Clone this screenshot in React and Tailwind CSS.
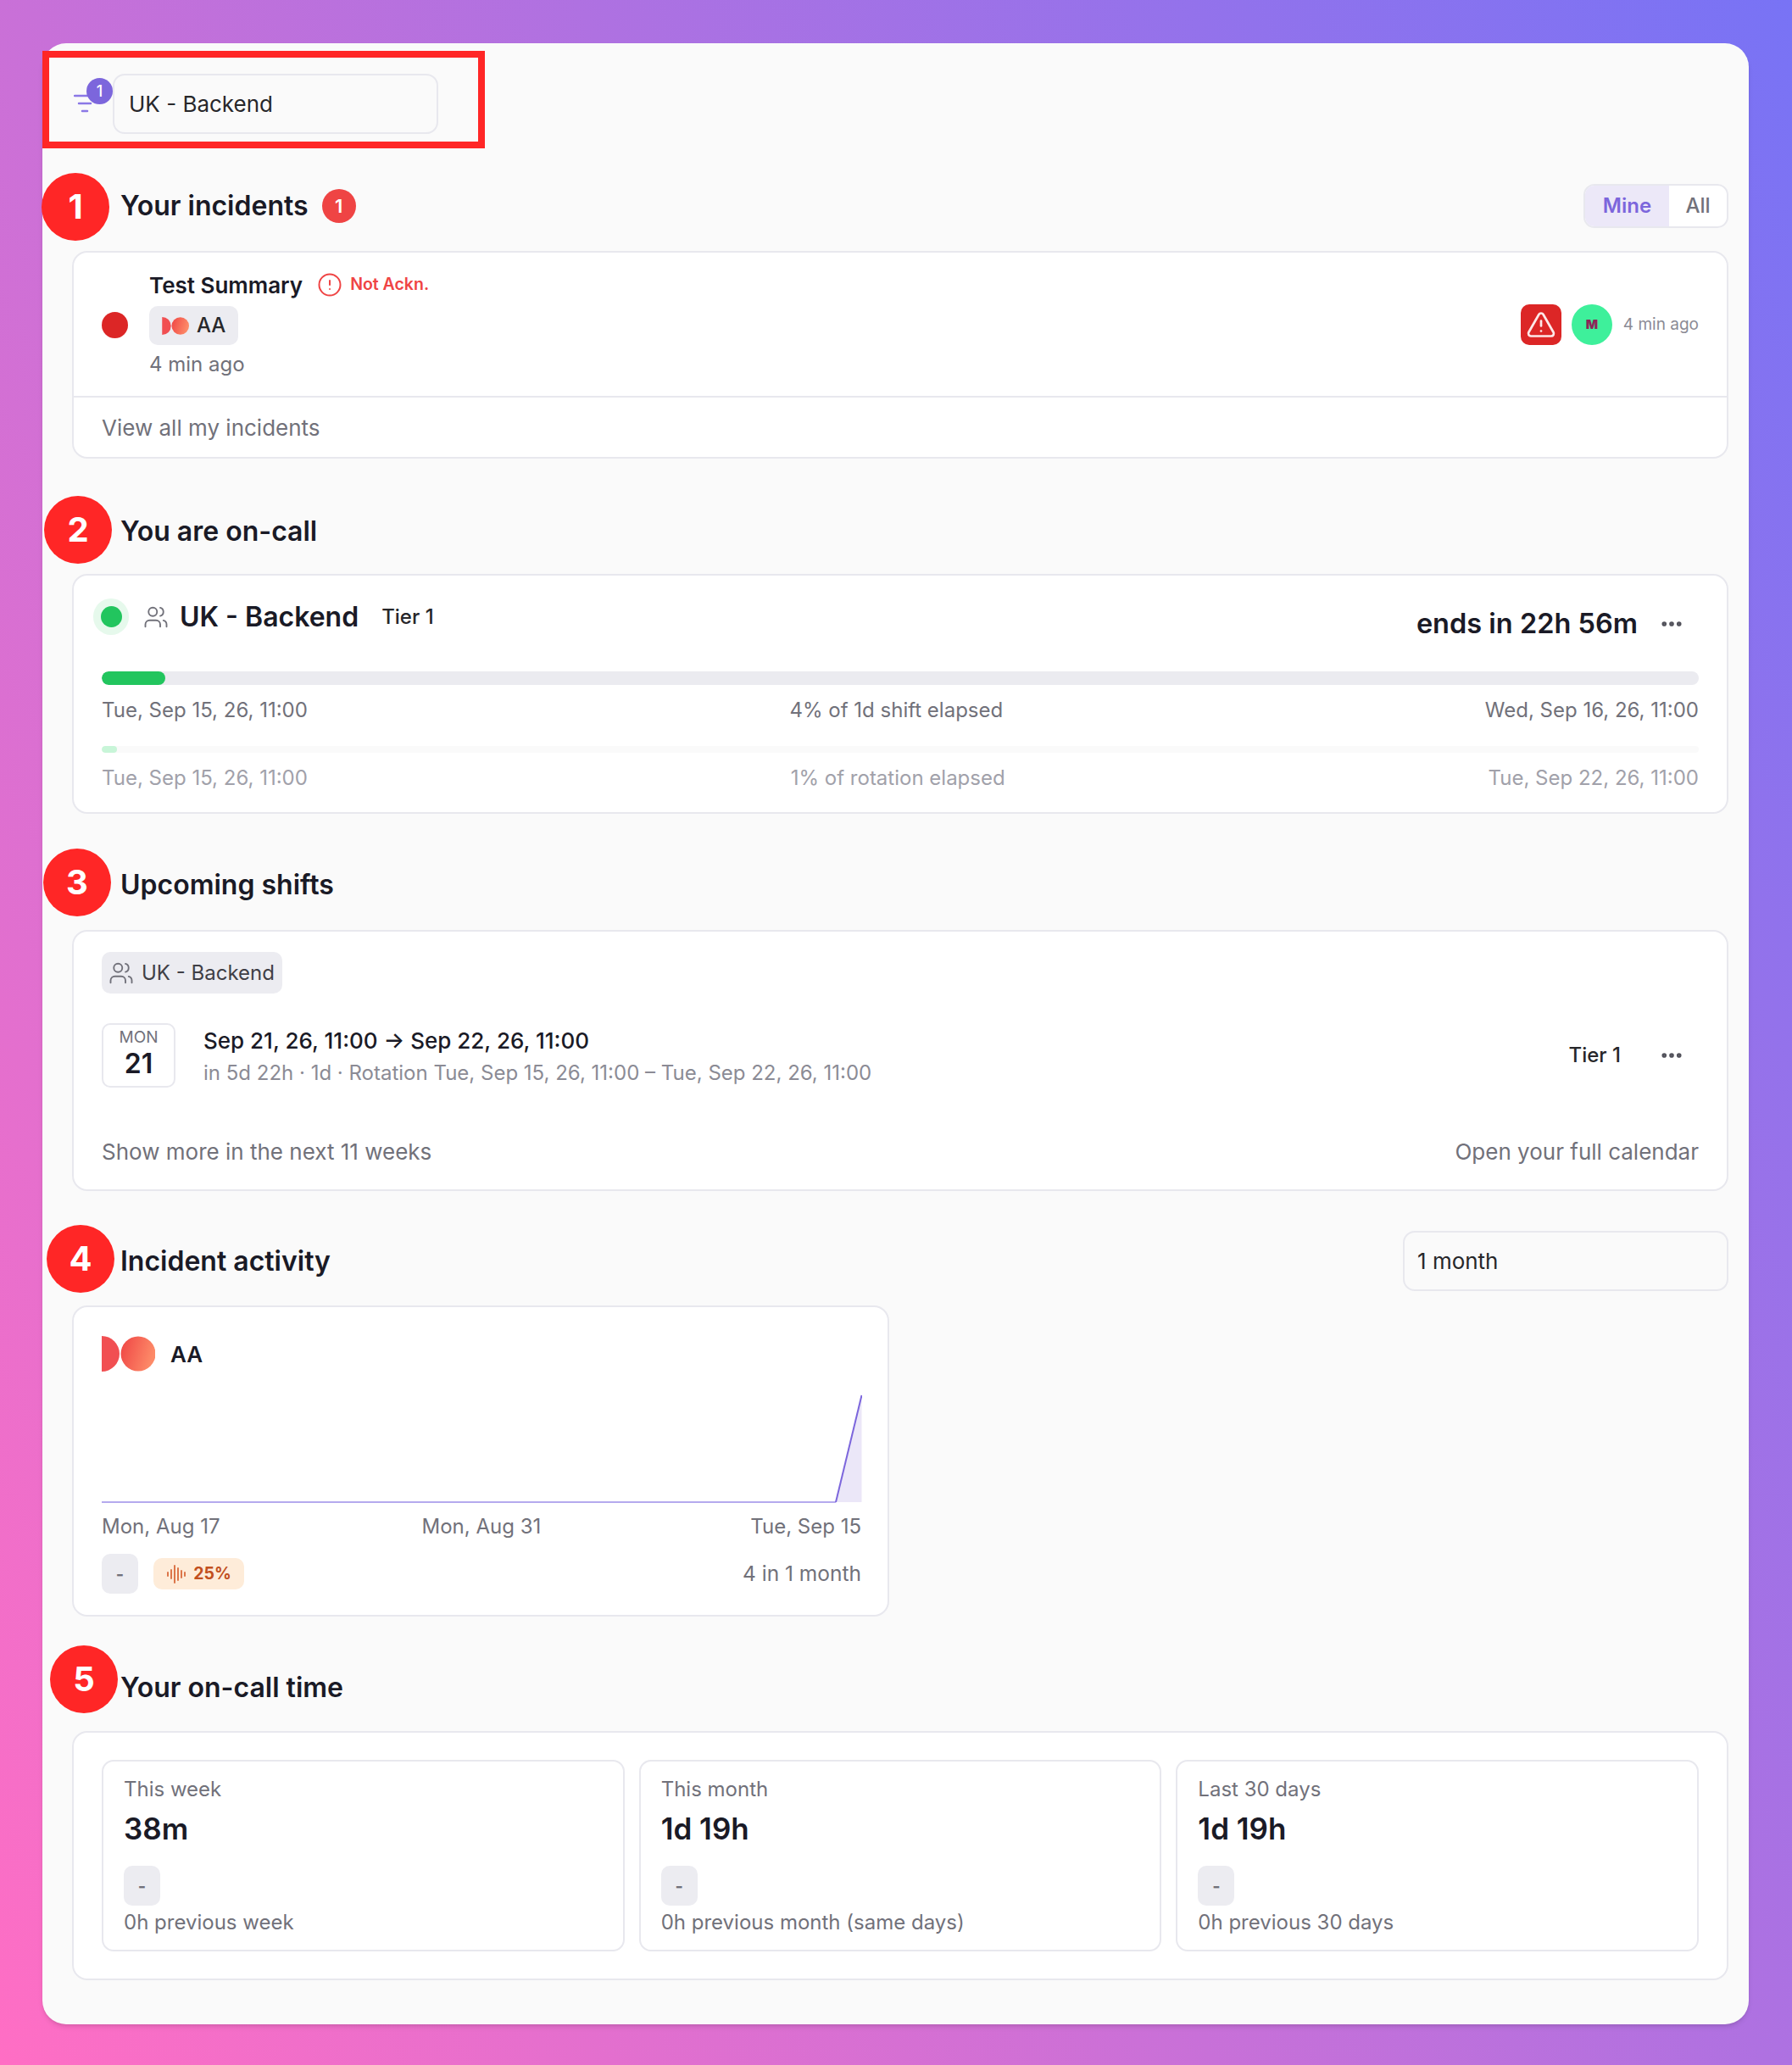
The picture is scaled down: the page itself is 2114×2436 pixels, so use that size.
import { AlertCircle, Ellipsis, TriangleAlert, Users } from 'lucide-react';

function Logo({ className, id }) {
    return (
        <svg viewBox="0 0 63 42" className={className}>
            <defs>
                <linearGradient id={id} x1="0" y1="0" x2="1" y2="0.3">
                    <stop offset="0" stopColor="#ef4444" />
                    <stop offset="1" stopColor="#fd8a68" />
                </linearGradient>
            </defs>
            <path d="M0 0A21 21 0 0 1 0 42Z" fill="#f14f52" />
            <circle cx="43" cy="21" r="20.5" fill={`url(#${id})`} />
        </svg>
    );
}

function Card({ className = '', children }) {
    return <div className={`rounded-[18px] border-2 border-[#e8e8ee] bg-white ${className}`}>{children}</div>;
}

function Heading({ marker, markerPos, title, className = '', badge, action }) {
    return (
        <div className={`relative flex min-h-[52px] items-center justify-between pl-[57px] ${className}`}>
            <span className={`absolute flex h-[80px] w-[80px] items-center justify-center rounded-full bg-[#ff2626] text-[40px] font-bold text-white ${markerPos}`}>
                {marker}
            </span>
            <div className="flex items-center gap-[16px]">
                <h2 className="text-[32px] font-semibold text-[#1a1a26]">{title}</h2>
                {badge}
            </div>
            {action}
        </div>
    );
}

function Progress({ width, barClass, fillClass, textClass, labels }) {
    return (
        <div>
            <div className={`overflow-hidden rounded-full ${barClass}`}>
                <div className={`h-full rounded-full ${width} ${fillClass}`} />
            </div>
            <div className={`mt-[15px] flex justify-between text-[24px] leading-[30px] ${textClass}`}>
                {labels.map((label) => (
                    <span key={label}>{label}</span>
                ))}
            </div>
        </div>
    );
}

function StatCard({ label, value, previous }) {
    return (
        <div className="flex flex-col rounded-[14px] border-2 border-[#e8e8ee] px-[24px] pb-[17px] pt-[18px]">
            <div className="text-[24px] leading-[30px] text-[#71717a]">{label}</div>
            <div className="mt-[9px] text-[35px] font-semibold leading-[44px] text-[#1a1a26]">{value}</div>
            <DashChip className="mt-[22px]" />
            <div className="mt-[5px] text-[24px] leading-[30px] text-[#71717a]">{previous}</div>
        </div>
    );
}

function DashChip({ className = '' }) {
    return (
        <span className={`flex h-[47px] w-[43px] items-center justify-center rounded-[10px] bg-[#ececf1] text-[20px] font-bold text-[#71717a] ${className}`}>
            -
        </span>
    );
}

export default function App() {
    return (
        <div className="min-h-screen bg-linear-[60deg,#ff6ec4,#7873f5] pb-[48px] pl-[50px] pr-[51px] pt-[51px] font-['Inter',sans-serif]">
            <main className="relative rounded-[28px] bg-[#fafafa] pb-[52px] pl-[35px] pr-[24px] pt-[36px] shadow-md">
                <div className="absolute left-0 top-[9px] h-[115px] w-[522px] border-[8px] border-[#ff2626]" />

                <div className="flex items-center">
                    <div className="relative h-[71px] w-[49px]">
                        <svg viewBox="0 0 26 22" className="absolute left-[2px] top-[24px] h-[22px] w-[26px]" fill="none" stroke="#8b78e6" strokeWidth="2.5" strokeLinecap="round">
                            <path d="M1 2h24M6 11h14M10 20h6" />
                        </svg>
                        <span className="absolute left-[17px] top-[5px] flex h-[31px] w-[31px] items-center justify-center rounded-full bg-[#7c66dc] text-[18px] font-medium text-white">
                            1
                        </span>
                    </div>
                    <div className="-ml-[1px] flex h-[71px] w-[384px] items-center rounded-[14px] border-2 border-[#e8e8ee] bg-[#fafafa] pl-[17px] text-[26px] text-[#27272a]">
                        UK - Backend
                    </div>
                </div>

                <Heading
                    marker="1"
                    markerPos="-left-[36px] -top-[13px]"
                    title="Your incidents"
                    className="mt-[59px]"
                    badge={
                        <span className="flex h-[40px] w-[40px] items-center justify-center rounded-full bg-[#ef4444] text-[22px] font-semibold text-white">
                            1
                        </span>
                    }
                    action={
                        <div className="flex h-[52px] w-[171px] overflow-hidden rounded-[13px] border-2 border-[#e8e8ee] bg-white text-[24px]">
                            <span className="flex w-[99px] items-center justify-center bg-[#ece8f8] font-semibold text-[#7c66dc]">Mine</span>
                            <span className="flex flex-1 items-center justify-center font-medium text-[#71717a]">All</span>
                        </div>
                    }
                />

                <Card className="mt-[27px]">
                    <div className="flex items-center justify-between pb-[22px] pl-[33px] pr-[33px] pt-[23px]">
                        <div className="flex items-center gap-[25px]">
                            <span className="h-[31px] w-[31px] rounded-full bg-[#dc2626]" />
                            <div>
                                <div className="flex h-[30px] items-center">
                                    <span className="text-[26px] font-semibold text-[#1a1a26]">Test Summary</span>
                                    <AlertCircle className="ml-[17px] h-[30px] w-[30px] text-[#ef4444]" strokeWidth={1.6} />
                                    <span className="ml-[9px] text-[19.5px] font-semibold text-[#ef4444]">Not Ackn.</span>
                                </div>
                                <div className="mt-[10px] flex h-[46px] w-[105px] items-center gap-[9px] rounded-[10px] bg-[#ececf1] pl-[15px] text-[24px] font-medium text-[#27272a]">
                                    <Logo id="logo-chip" className="h-[21px] w-[32px]" />
                                    AA
                                </div>
                                <div className="mt-[8px] text-[24px] leading-[30px] text-[#71717a]">4 min ago</div>
                            </div>
                        </div>
                        <div className="flex items-center">
                            <span className="flex h-[48px] w-[48px] items-center justify-center rounded-[10px] bg-[#dc2626]">
                                <TriangleAlert className="h-[36px] w-[36px] text-[#fde8e8]" strokeWidth={1.8} />
                            </span>
                            <span className="ml-[12px] flex h-[48px] w-[48px] items-center justify-center rounded-full bg-[#3ef09b] text-[15px] font-black text-[#8e2457]">
                                M
                            </span>
                            <span className="ml-[13px] text-[19px] text-[#8b8b95]">4 min ago</span>
                        </div>
                    </div>
                    <div className="flex h-[72px] items-center border-t-2 border-[#e8e8ee] pl-[33px] text-[26px] text-[#71717a]">
                        View all my incidents
                    </div>
                </Card>

                <Heading marker="2" markerPos="-left-[33px] -top-[16px]" title="You are on-call" className="mt-[60px]" />
                <Card className="mt-[24px] pb-[25px] pl-[33px] pr-[33px] pt-[27px]">
                    <div className="flex h-[43px] items-start justify-between">
                        <div className="flex h-[43px] items-center">
                            <span className="-ml-[10px] flex h-[43px] w-[42px] items-center justify-center rounded-full bg-[#e6f9ec]">
                                <span className="h-[25px] w-[25px] rounded-full bg-[#22c55e]" />
                            </span>
                            <Users className="ml-[17px] h-[30px] w-[30px] text-[#71717a]" strokeWidth={1.5} />
                            <span className="ml-[13px] text-[32px] font-semibold leading-[43px] text-[#1a1a26]">UK - Backend</span>
                            <span className="ml-[27px] text-[24px] font-medium leading-[43px] text-[#27272a]">Tier 1</span>
                        </div>
                        <div className="mt-[8px] flex h-[43px] items-center pr-[17px]">
                            <span className="text-[32.5px] font-semibold leading-[43px] text-[#1a1a26]">ends in 22h 56m</span>
                            <Ellipsis className="ml-[25px] h-[30px] w-[30px] text-[#52525b]" strokeWidth={2.5} />
                        </div>
                    </div>
                    <div className="mt-[43px]">
                        <Progress
                            width="w-[75px]"
                            barClass="h-[16px] bg-[#ebebf0]"
                            fillClass="bg-[#22c55e]"
                            textClass="text-[#71717a]"
                            labels={['Tue, Sep 15, 26, 11:00', '4% of 1d shift elapsed', 'Wed, Sep 16, 26, 11:00']}
                        />
                    </div>
                    <div className="mt-[27px]">
                        <Progress
                            width="w-[18px]"
                            barClass="h-[8px] bg-[#fafafa]"
                            fillClass="bg-[#c8f5d8]"
                            textClass="text-[#a1a1aa]"
                            labels={['Tue, Sep 15, 26, 11:00', '1% of rotation elapsed', 'Tue, Sep 22, 26, 11:00']}
                        />
                    </div>
                </Card>

                <Heading marker="3" markerPos="-left-[34px] -top-[17px]" title="Upcoming shifts" className="mt-[58px]" />
                <Card className="mt-[27px] pb-[29px] pl-[33px] pr-[33px] pt-[24px]">
                    <div className="flex h-[49px] w-[213px] items-center gap-[9px] rounded-[10px] bg-[#ececf1] pl-[8px] text-[24px] text-[#3f3f46]">
                        <Users className="h-[30px] w-[30px] text-[#71717a]" strokeWidth={1.5} />
                        UK - Backend
                    </div>
                    <div className="mt-[35px] flex items-center">
                        <div className="flex h-[76px] w-[87px] flex-col items-center rounded-[10px] border-2 border-[#e8e8ee] pt-[3px]">
                            <span className="text-[19px] leading-[24px] text-[#71717a]">MON</span>
                            <span className="text-[32px] font-semibold leading-[38px] text-[#1a1a26]">21</span>
                        </div>
                        <div className="ml-[33px] pt-[4px]">
                            <div className="text-[26px] font-medium leading-[32px] text-[#1a1a26]">Sep 21, 26, 11:00 → Sep 22, 26, 11:00</div>
                            <div className="mt-[6px] text-[24px] leading-[32px] text-[#8b8b95]">
                                in 5d 22h · 1d · Rotation Tue, Sep 15, 26, 11:00 – Tue, Sep 22, 26, 11:00
                            </div>
                        </div>
                        <span className="ml-auto text-[24px] font-medium text-[#27272a]">Tier 1</span>
                        <Ellipsis className="ml-[45px] mr-[17px] h-[30px] w-[30px] text-[#52525b]" strokeWidth={2.5} />
                    </div>
                    <div className="mt-[61px] flex justify-between text-[26px] leading-[30px] text-[#71717a]">
                        <span>Show more in the next 11 weeks</span>
                        <span>Open your full calendar</span>
                    </div>
                </Card>

                <Heading
                    marker="4"
                    markerPos="-left-[30px] -top-[7px]"
                    title="Incident activity"
                    className="mt-[47px]"
                    action={
                        <div className="flex h-[71px] w-[384px] items-center rounded-[14px] border-2 border-[#e8e8ee] bg-[#fafafa] pl-[15px] text-[26px] text-[#27272a]">
                            1 month
                        </div>
                    }
                />
                <Card className="mt-[17px] w-[964px] pb-[25px] pl-[33px] pr-[31px] pt-[34px]">
                    <div className="flex items-center gap-[18px]">
                        <Logo id="logo-large" className="h-[42px] w-[63px]" />
                        <span className="text-[26px] font-semibold text-[#1a1a26]">AA</span>
                    </div>
                    <svg viewBox="0 0 897 128" className="mt-[27px] block h-[128px] w-[897px]">
                        <path d="M866 127L896.5 1V127Z" fill="#ebe7f8" />
                        <path d="M0 127H866" fill="none" stroke="#b5aaee" strokeWidth="2" />
                        <path d="M866 127L896.5 1" fill="none" stroke="#7c66dc" strokeWidth="2" />
                    </svg>
                    <div className="mt-[13px] flex justify-between text-[24px] leading-[30px] text-[#71717a]">
                        <span>Mon, Aug 17</span>
                        <span className="pr-[9px]">Mon, Aug 31</span>
                        <span>Tue, Sep 15</span>
                    </div>
                    <div className="mt-[17px] flex items-center">
                        <DashChip />
                        <span className="ml-[18px] flex h-[37px] w-[107px] items-center justify-center gap-[8px] rounded-[10px] bg-[#feecd9] text-[19.5px] font-bold text-[#c2501e]">
                            <svg viewBox="0 0 24 24" className="h-[24px] w-[24px]" fill="none" stroke="#d9693a" strokeWidth="1.8" strokeLinecap="round">
                                <path d="M2 10v4M6 7v10M10 2v20M14 5v14M18 8v8M22 10v4" />
                            </svg>
                            25%
                        </span>
                        <span className="ml-auto text-[24.5px] text-[#71717a]">4 in 1 month</span>
                    </div>
                </Card>

                <Heading marker="5" markerPos="-left-[26px] -top-[24px]" title="Your on-call time" className="mt-[58px]" />
                <Card className="mt-[25px] grid grid-cols-3 gap-[17px] pb-[32px] pl-[33px] pr-[33px] pt-[32px]">
                    <StatCard label="This week" value="38m" previous="0h previous week" />
                    <StatCard label="This month" value="1d 19h" previous="0h previous month (same days)" />
                    <StatCard label="Last 30 days" value="1d 19h" previous="0h previous 30 days" />
                </Card>
            </main>
        </div>
    );
}
